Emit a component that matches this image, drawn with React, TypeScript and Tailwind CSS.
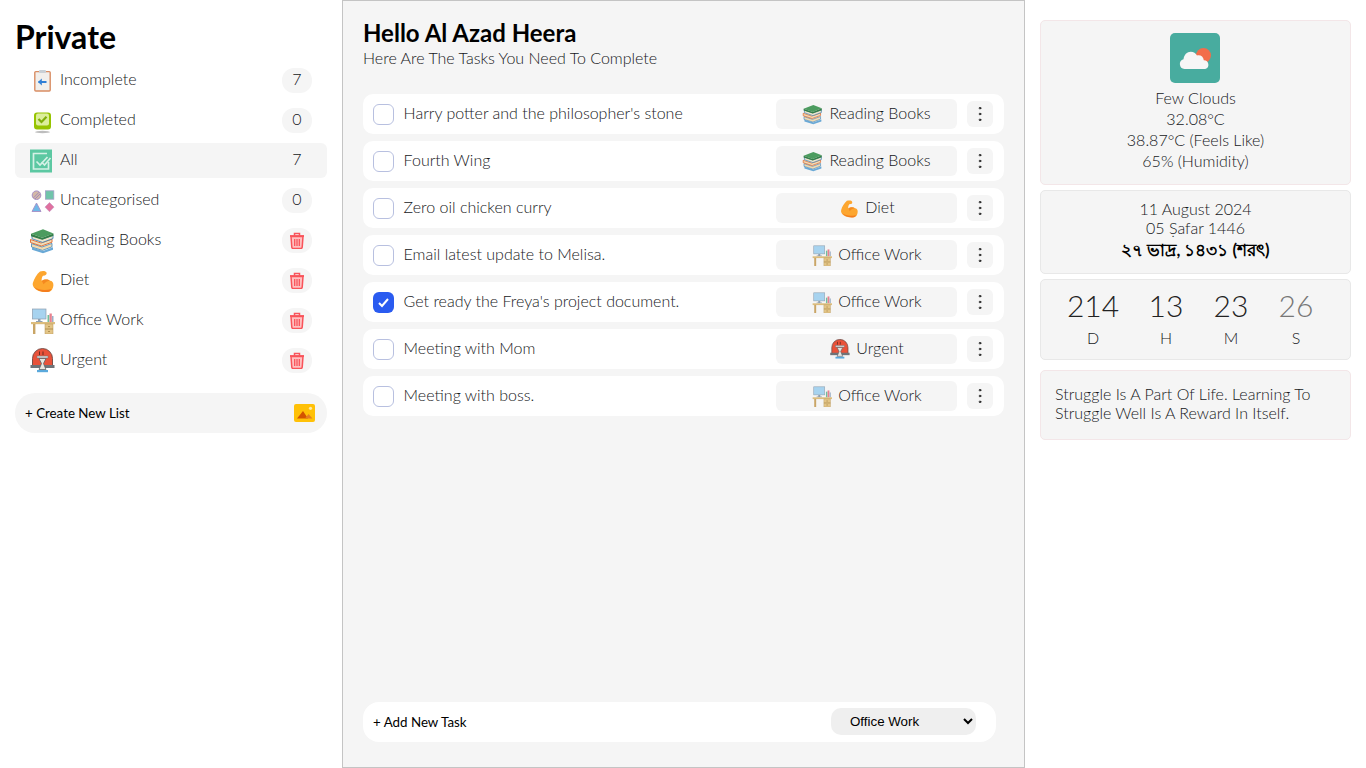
import { EllipsisVertical } from "lucide-react";

type IconProps = { size?: number };

function ClipboardIcon({ size = 26 }: IconProps) {
  return (
    <svg width={size} height={size} viewBox="0 0 26 26">
      <rect x="5.8" y="3.6" width="15.4" height="19.4" rx="1" fill="#f1efec" stroke="#d98d63" strokeWidth="1.4" />
      <rect x="10" y="2" width="7" height="3" rx="1" fill="#c9d0d6" />
      <path d="M9.5 14h8" stroke="#2f7fd6" strokeWidth="2" />
      <path d="M12.8 10.6 9 14l3.8 3.4z" fill="#2f7fd6" />
    </svg>
  );
}

function CompletedIcon({ size = 26 }: IconProps) {
  return (
    <svg width={size} height={size} viewBox="0 0 26 26">
      <ellipse cx="13.5" cy="24" rx="7.5" ry="1.2" fill="#bdbdbd" />
      <rect x="5" y="4.5" width="17" height="17" rx="3" fill="#96c400" />
      <rect x="7" y="5.6" width="13" height="12" rx="2" fill="#dcee9b" />
      <path d="m9.5 11 3 3 5-5.2" fill="none" stroke="#7fae0a" strokeWidth="2.2" />
    </svg>
  );
}

function AllIcon({ size = 26 }: IconProps) {
  return (
    <svg width={size} height={size} viewBox="0 0 26 26">
      <rect x="1" y="1.5" width="22" height="23" fill="#5cc8a2" />
      <path d="M18 5.500H4.500v15.500h15V14" fill="none" stroke="#d5f1e6" strokeWidth="1.700" />
      <path d="m7.500 13.500 3.500 3.500 7.500-8M12.500 14l3 3 6-7" fill="none" stroke="#d5f1e6" strokeWidth="1.700" />
    </svg>
  );
}

function ShapesIcon({ size = 26 }: IconProps) {
  return (
    <svg width={size} height={size} viewBox="0 0 26 26">
      <circle cx="7.5" cy="7.2" r="4.3" fill="#d3b8a6" stroke="#a78fc4" strokeWidth="1" />
      <path d="m4.5 9.8 5.6-5.6M6 11l5-5" stroke="#9d84bd" strokeWidth="0.9" />
      <rect x="16.4" y="2.8" width="8.4" height="8.4" fill="#70c4aa" stroke="#a3a0c8" strokeWidth="0.8" />
      <path d="M7.5 15 12 23.5H3z" fill="#6fb8e8" stroke="#a78fc4" strokeWidth="0.9" />
      <path d="m20.5 14.5 4.5 4.6-4.5 4.6-4.5-4.6z" fill="#e0719f" stroke="#c89ac4" strokeWidth="0.7" />
    </svg>
  );
}

function BooksIcon({ size = 26 }: IconProps) {
  return (
    <svg width={size} height={size} viewBox="0 0 26 26">
      <path d="M3 19.5 14 23l10-3.8v2.6L14 25.2 3 21.8z" fill="#6aa9d6" />
      <path d="M2.5 15.6 13 19l10-3.6v3.4L13.5 22.4 2.5 19z" fill="#f3d9ae" stroke="#3f86bd" strokeWidth="0.8" />
      <path d="M1.5 11.5 12 15l11-3.8v3L12.5 18 1.5 14.5z" fill="#f0dcb8" stroke="#e0672a" strokeWidth="0.9" />
      <path d="M3 7.5 13.5 11 24 7.3v3.2L13.5 14.4 3 10.8z" fill="#efe4cc" stroke="#2f7ab0" strokeWidth="0.8" />
      <path d="m2 5.8 12-4.6 10.5 4.2L13.2 9.8z" fill="#4c9c5f" />
      <path d="M2 5.8v2.4l11.2 3.6 11.3-4V5.4L13.2 9.8z" fill="#357f48" />
    </svg>
  );
}

function MuscleIcon({ size = 26 }: IconProps) {
  return (
    <svg width={size} height={size} viewBox="0 0 26 26">
      <path
        d="M11 3.5c2.5-.9 6-.8 6.6 1.3.4 1.6-.8 2.8-3.6 2.9-1.1 1.3-1.6 3.3-1.2 5.2 2.4-1.9 6-2 8.2-.2 1.9-.1 3.5 1.6 3.4 4.3-.2 3.7-2 6.2-3.6 6.4-4 1.1-9.500.6-13-1.500-3.100-1.900-4.800-4.900-3.800-7.400C5.100 11 7.700 6.200 11 3.500z"
        fill="#fda62f"
      />
      <path d="M12.800 13c2.400-1.900 6-2 8.200-.2-2.500.2-5 1.500-6.400 3.500z" fill="#f5891f" />
      <path d="M5 19c4.500 3 11 4 17.500 2-1 1.600-1.800 2.500-2.600 2.700-5.400 1-11.400-.5-14.900-4.700z" fill="#f47d1e" />
    </svg>
  );
}

function OfficeIcon({ size = 26 }: IconProps) {
  return (
    <svg width={size} height={size} viewBox="0 0 26 26">
      <rect x="3.400" y="1" width="13.600" height="10" fill="#a7d3ef" stroke="#8f9fb0" strokeWidth="0.7" />
      <path d="M9 11h2.500v2H9zM7 13h6.500v1H7z" fill="#8f9fb0" />
      <rect x="18.500" y="7" width="1.800" height="7" fill="#6fbf9d" />
      <rect x="20.500" y="5.500" width="2.300" height="8.500" fill="#e8818f" />
      <rect x="23" y="8" width="1.500" height="6" fill="#9ab0c7" />
      <rect x="2" y="14" width="24" height="2.200" fill="#dcbd7e" />
      <rect x="4" y="16" width="2.400" height="10" fill="#c9a566" />
      <rect x="16" y="16" width="8" height="10" fill="#e3c587" stroke="#b8975a" strokeWidth="0.5" />
      <path d="M16 21h8M19 18.600h2M19 23.500h2" stroke="#a68445" strokeWidth="0.8" />
    </svg>
  );
}

function UrgentIcon({ size = 26 }: IconProps) {
  return (
    <svg width={size} height={size} viewBox="0 0 26 26">
      <path d="M3.500 18v-7.500a10 10 0 0 1 20 0V18z" fill="#e9523a" stroke="#6d4742" strokeWidth="0.900" />
      <rect x="1.500" y="17" width="24" height="3" fill="#6f7378" />
      <path d="M10.500 3.500v3.500M14 3.500v3.500" stroke="#6b2a20" strokeWidth="1" />
      <rect x="8" y="8" width="11" height="2" fill="#d9d9d9" stroke="#6f7378" strokeWidth="0.500" />
      <path d="M10 10.500h7l-2.500 5 2.500 6h-7l2.500-6z" fill="#e9e5df" stroke="#5d6166" strokeWidth="0.800" />
      <rect x="8" y="22" width="11" height="2.200" fill="#5aa9dc" />
    </svg>
  );
}

function TrashIcon() {
  return (
    <svg width="16" height="17" viewBox="0 0 16 17">
      <path d="M2 4.500h12l-.8 10.800a1.200 1.200 0 0 1-1.200 1.100H4a1.200 1.200 0 0 1-1.200-1.100z" fill="#ffc0c0" stroke="#f9535a" strokeWidth="1.500" />
      <path d="M1 4h14" stroke="#f9535a" strokeWidth="1.800" />
      <path d="M5.500 3.500V1.500h5v2" fill="none" stroke="#f9535a" strokeWidth="1.500" />
      <path d="M5.700 7v7M8 7v7M10.300 7v7" stroke="#f9535a" strokeWidth="1.300" />
    </svg>
  );
}

function ImageIcon() {
  return (
    <svg width="21" height="18" viewBox="0 0 21 18">
      <rect width="21" height="18" rx="2" fill="#ffc107" />
      <circle cx="16.500" cy="4.300" r="1.600" fill="#ffe9a8" />
      <path d="m3 14.500 6-7.500 5 7.500z" fill="#d35400" />
      <path d="m11 14.500 3.500-4.500 4 4.500z" fill="#e67e22" />
    </svg>
  );
}

function WeatherIcon() {
  return (
    <div className="w-[50px] h-[50px] mr-[1px] rounded-[5px] bg-[#48ac9f] flex items-center justify-center">
      <svg width="32" height="24" viewBox="0 0 32 24">
        <circle cx="24.500" cy="9.500" r="7.500" fill="#f26d4a" />
        <path
          d="M5.500 23a5 5 0 0 1-1-9.800c.500-4.400 3.500-7.500 7.300-7.500 2.800 0 5 1.500 6.200 3.900 3.300-1 6.500 1.200 6.800 4.600a4.500 4.500 0 0 1 1.400 8.800z"
          fill="#f6f6f6"
        />
      </svg>
    </div>
  );
}

const lists = [
  { name: "Incomplete", Icon: ClipboardIcon, count: "7" },
  { name: "Completed", Icon: CompletedIcon, count: "0" },
  { name: "All", Icon: AllIcon, count: "7", active: true },
  { name: "Uncategorised", Icon: ShapesIcon, count: "0" },
  { name: "Reading Books", Icon: BooksIcon },
  { name: "Diet", Icon: MuscleIcon },
  { name: "Office Work", Icon: OfficeIcon },
  { name: "Urgent", Icon: UrgentIcon },
];

const tasks = [
  { title: "Harry potter and the philosopher's stone", category: "Reading Books", Icon: BooksIcon },
  { title: "Fourth Wing", category: "Reading Books", Icon: BooksIcon },
  { title: "Zero oil chicken curry", category: "Diet", Icon: MuscleIcon },
  { title: "Email latest update to Melisa.", category: "Office Work", Icon: OfficeIcon },
  { title: "Get ready the Freya's project document.", category: "Office Work", Icon: OfficeIcon, done: true },
  { title: "Meeting with Mom", category: "Urgent", Icon: UrgentIcon },
  { title: "Meeting with boss.", category: "Office Work", Icon: OfficeIcon },
];

const countdown = [
  { value: "214", label: "D", box: "w-[52px] ml-[26px]", color: "text-[#222]" },
  { value: "13", label: "H", box: "w-[36px] ml-[29px]", color: "text-[#222]" },
  { value: "23", label: "M", box: "w-[36px] ml-[29px]", color: "text-[#222]" },
  { value: "26", label: "S", box: "w-[36px] ml-[29px]", color: "text-[#777]" },
];

export default function App() {
  return (
    <div className="flex h-screen bg-white font-['Lato',sans-serif] font-light text-[16px] text-[#16181b]">
      <aside className="w-[342px] shrink-0 px-[15px]">
        <h1 className="h-[63px] pt-[16px] text-[32px] leading-[42px] font-bold text-black">Private</h1>
        <ul className="flex flex-col gap-[5px]">
          {lists.map(({ name, Icon, count, active }) => (
            <li
              key={name}
              className={`h-[35px] flex items-center pl-[14px] pr-[15px] rounded-[6px] ${active ? "bg-[#f5f5f5]" : ""}`}
            >
              <Icon />
              <span className="ml-[5px] mb-[4px] flex-1">{name}</span>
              {active ? (
                <span className="w-[30px] mb-[4px] text-center">{count}</span>
              ) : (
                <span
                  className={`w-[30px] h-[25px] rounded-[12px] bg-[#f5f5f5] flex items-center justify-center ${count ? "pb-[4px]" : ""}`}
                >
                  {count ?? <TrashIcon />}
                </span>
              )}
            </li>
          ))}
        </ul>
        <div className="mt-[15px] h-[40px] rounded-[20px] bg-[#f5f5f5] flex items-center justify-between pl-[10px] pr-[12px]">
          <span className="mt-[2px] text-[13.33px] font-normal text-black">+ Create New List</span>
          <ImageIcon />
        </div>
      </aside>

      <main className="w-[683px] shrink-0 border border-[#c4c4c4] bg-[#f5f5f5] pl-[20px] pr-[20px] flex flex-col">
        <h2 className="mt-[16px] text-[24px] leading-[31px] font-bold text-black">Hello Al Azad Heera</h2>
        <p className="text-[16px] leading-[20px]">Here Are The Tasks You Need To Complete</p>
        <ul className="mt-[26px] flex flex-col gap-[7px]">
          {tasks.map(({ title, category, Icon, done }) => (
            <li key={title} className="h-[40px] rounded-[10px] bg-white flex items-center pl-[10px] pr-[11px]">
              {done ? (
                <span className="w-[21px] h-[21px] rounded-[6px] bg-[#2a5bf0] flex items-center justify-center">
                  <svg width="13" height="13" viewBox="0 0 13 13">
                    <path d="m2 7 3 3 6-7" fill="none" stroke="#fff" strokeWidth="2" />
                  </svg>
                </span>
              ) : (
                <span className="w-[21px] h-[21px] rounded-[6px] bg-white border border-[#b8c0e0]" />
              )}
              <span className="ml-[9.6px] mb-[2px] flex-1">{title}</span>
              <span className="w-[181px] h-[30px] rounded-[6px] bg-[#f5f5f5] flex items-center justify-center gap-[6px]">
                <Icon size={21} />
                <span className="mb-[2px]">{category}</span>
              </span>
              <span className="ml-[10px] w-[26px] h-[26px] rounded-[6px] bg-[#f5f5f5] flex items-center justify-center">
                <EllipsisVertical size={20} strokeWidth={1.1} color="#111" />
              </span>
            </li>
          ))}
        </ul>
        <div className="mt-auto mb-[25px] w-[633px] h-[40px] rounded-[16px] bg-white flex items-center justify-between pl-[10px] pr-[20px]">
          <span className="mt-[2px] text-[13.33px] font-normal text-black">+ Add New Task</span>
          <select
            defaultValue="Office Work"
            className="self-start mt-[6px] w-[145px] h-[27px] rounded-[10px] bg-[#efefef] pl-[15px] font-['Liberation_Sans',sans-serif] font-normal text-[13.33px] text-black"
          >
            <option>Office Work</option>
            <option>Reading Books</option>
            <option>Diet</option>
            <option>Urgent</option>
          </select>
        </div>
      </main>

      <section className="w-[341px] shrink-0 pl-[15px] pr-[15px] pt-[20px] flex flex-col">
        <div className="h-[165px] rounded-[5px] border border-[#f3e6e8] bg-[#f5f5f5] pt-[12px] flex flex-col items-center text-center leading-[21px]">
          <WeatherIcon />
          <p className="mt-[4px]">Few Clouds</p>
          <p>32.08°C</p>
          <p>38.87°C (Feels Like)</p>
          <p>65% (Humidity)</p>
        </div>
        <div className="mt-[5px] h-[84px] rounded-[5px] border border-[#e8e8e8] bg-[#f5f5f5] pt-[8px] text-center leading-[19px]">
          <p>11 August 2024</p>
          <p>05 Ṣafar 1446</p>
          <p className="mt-[4px] text-[16.6px] font-bold text-black">২৭ ভাদ্র, ১৪৩১ (শরৎ)</p>
        </div>
        <div className="mt-[5px] h-[81px] rounded-[5px] border border-[#e8e8e8] bg-[#f5f5f5] flex pt-[6px]">
          {countdown.map(({ value, label, box, color }) => (
            <div key={label} className={`${box} flex flex-col items-center`}>
              <span className={`text-[30px] leading-[38px] whitespace-nowrap ${color}`}>{value}</span>
              <span className="mt-[4px] leading-[20px]">{label}</span>
            </div>
          ))}
        </div>
        <div className="mt-[10px] h-[70px] rounded-[5px] border border-[#f3e6e8] bg-[#f5f5f5] px-[14px] pt-[13px] leading-[19px]">
          Struggle Is A Part Of Life. Learning To Struggle Well Is A Reward In Itself.
        </div>
      </section>
    </div>
  );
}
